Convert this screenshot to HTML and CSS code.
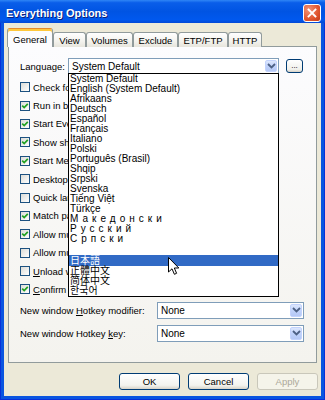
FILE: index.html
```html
<!DOCTYPE html>
<html lang="en">
<head>
    <meta charset="UTF-8">
    <title>Everything Options</title>
    <link rel="stylesheet" href="styles.css">
</head>
<body>
    <div class="window">
        <div class="titlebar">
            <span class="title">Everything Options</span>
            <span class="close-btn">
                <svg width="10" height="10" viewBox="0 0 10 10"><path d="M1.5 1.5 L8.5 8.5 M8.5 1.5 L1.5 8.5" stroke="#fff" stroke-width="1.8" stroke-linecap="square"/></svg>
            </span>
        </div>

        <div class="client">
            <div class="tabs">
                <div class="tab active tab-general">General</div>
                <div class="tab tab-view">View</div>
                <div class="tab tab-volumes">Volumes</div>
                <div class="tab tab-exclude">Exclude</div>
                <div class="tab tab-etp">ETP/FTP</div>
                <div class="tab tab-http">HTTP</div>
            </div>

            <div class="panel">
                <div class="lang-row">
                    <label class="lang-label">Language:</label>
                    <div class="combo lang-combo">
                        <span class="combo-text">System Default</span>
                        <span class="combo-arrow">
                            <svg width="9" height="6" viewBox="0 0 9 6"><path d="M1 1 L4.5 4.5 L8 1" fill="none" stroke="#4d6185" stroke-width="1.8"/></svg>
                        </span>
                        <ul class="dropdown">
                            <li>System Default</li>
                            <li>English (System Default)</li>
                            <li>Afrikaans</li>
                            <li>Deutsch</li>
                            <li>Español</li>
                            <li>Français</li>
                            <li>Italiano</li>
                            <li>Polski</li>
                            <li>Português (Brasil)</li>
                            <li>Shqip</li>
                            <li>Srpski</li>
                            <li>Svenska</li>
                            <li>Tiếng Việt</li>
                            <li>Türkçe</li>
                            <li class="wide">Македонски</li>
                            <li class="wide">Русский</li>
                            <li class="wide">Српски</li>
                            <li class="blank"></li>
                            <li class="cjk selected">日本語</li>
                            <li class="cjk">正體中文</li>
                            <li class="cjk">简体中文</li>
                            <li class="cjk">한국어</li>
                        </ul>
                    </div>
                    <button class="browse">...</button>
                </div>

                <div class="checks">
                    <div class="check-row"><span class="checkbox"></span><span>Check for updates on startup</span></div>
                    <div class="check-row"><span class="checkbox checked"></span><span>Run in background</span></div>
                    <div class="check-row"><span class="checkbox checked"></span><span>Start Everything on system startup</span></div>
                    <div class="check-row"><span class="checkbox checked"></span><span>Show shell context menus</span></div>
                    <div class="check-row"><span class="checkbox checked"></span><span>Start Menu shortcuts</span></div>
                    <div class="check-row"><span class="checkbox"></span><span>Desktop shortcut</span></div>
                    <div class="check-row"><span class="checkbox"></span><span>Quick launch shortcut</span></div>
                    <div class="check-row"><span class="checkbox checked"></span><span>Match path when search contains a slash</span></div>
                    <div class="check-row"><span class="checkbox checked"></span><span>Allow multiple windows</span></div>
                    <div class="check-row"><span class="checkbox"></span><span>Allow multiple instances</span></div>
                    <div class="check-row"><span class="checkbox"></span><span><u>U</u>nload when not in use</span></div>
                    <div class="check-row"><span class="checkbox checked"></span><span><u>C</u>onfirm delete</span></div>
                </div>

                <div class="hotkey-row">
                    <label class="hotkey-label">New window <u>H</u>otkey modifier:</label>
                    <div class="combo hotkey-combo">
                        <span class="combo-text">None</span>
                        <span class="combo-arrow">
                            <svg width="9" height="6" viewBox="0 0 9 6"><path d="M1 1 L4.5 4.5 L8 1" fill="none" stroke="#4d6185" stroke-width="1.8"/></svg>
                        </span>
                    </div>
                </div>
                <div class="hotkey-row">
                    <label class="hotkey-label">New window Hotkey <u>k</u>ey:</label>
                    <div class="combo hotkey-combo">
                        <span class="combo-text">None</span>
                        <span class="combo-arrow">
                            <svg width="9" height="6" viewBox="0 0 9 6"><path d="M1 1 L4.5 4.5 L8 1" fill="none" stroke="#4d6185" stroke-width="1.8"/></svg>
                        </span>
                    </div>
                </div>
            </div>

            <div class="buttons">
                <button class="btn">OK</button>
                <button class="btn">Cancel</button>
                <button class="btn" disabled>Apply</button>
            </div>
        </div>

        <svg class="cursor" width="12" height="19" viewBox="0 0 12 19">
            <path d="M0.5 0.5 L0.5 15 L4 11.8 L6.4 17.3 L8.6 16.3 L6.3 11 L10.8 11 Z" fill="#fff" stroke="#000" stroke-width="1" stroke-linejoin="miter"/>
        </svg>
    </div>
</body>
</html>
```

FILE: styles.css
```css
body {
    margin: 0;
    font-family: "Liberation Sans", Arial, sans-serif;
    font-size: 9.5px;
}
.window {
    position: relative;
    width: 325px;
    height: 400px;
    display: flex;
    flex-direction: column;
    background: #0a55e0;
    box-shadow: inset 1px 0 #0831d9, inset -1px 0 #0831d9, inset 0 -1px #0831d9;
    overflow: hidden;
}
.titlebar {
    height: 23px;
    box-sizing: border-box;
    padding: 3px 4px 0 6px;
    display: flex;
    align-items: center;
    justify-content: space-between;
    background: linear-gradient(#2f86f6 0%, #0a5ee9 12%, #0054e3 50%, #0058ee 85%, #0348d6 100%);
}
.title {
    color: #fff;
    font-weight: bold;
    font-size: 11px;
    text-shadow: 1px 1px #0a1f7a;
}
.close-btn {
    width: 16px;
    height: 16px;
    border: 1px solid #fff;
    border-radius: 3px;
    display: flex;
    align-items: center;
    justify-content: center;
    background: radial-gradient(circle at 30% 30%, #f29377, #e0562f 60%, #c23a17);
}
.client {
    flex: 1;
    margin: 0 4px 4px 4px;
    padding-top: 6px;
    background: #ece9d8;
    display: flex;
    flex-direction: column;
}
.tabs {
    display: flex;
    align-items: flex-end;
    height: 18px;
    margin-left: 3px;
    margin-bottom: -1px;
    position: relative;
    z-index: 1;
}
.tab {
    height: 15px;
    box-sizing: border-box;
    border: 1px solid #919b9c;
    border-bottom: none;
    border-radius: 3px 3px 0 0;
    background: linear-gradient(#ffffff, #f3f2ed 60%, #e7e5dc);
    display: flex;
    align-items: center;
    justify-content: center;
    padding-top: 1px;
}
.tab.active {
    height: 19px;
    background: #fcfcfe;
    border-top: 1px solid #e68b2c;
    box-shadow: inset 0 2px #ffc83c;
    padding-top: 2px;
}
.tab-general { width: 46px; }
.tab-view { width: 33px; }
.tab-volumes { width: 47px; }
.tab-exclude { width: 45px; }
.tab-etp { width: 50px; }
.tab-http { width: 34px; }
.panel {
    height: 317px;
    box-sizing: border-box;
    margin: 0 4px 0 4px;
    padding: 11px 11px 0 11px;
    border: 1px solid #919b9c;
    background: linear-gradient(#fcfcfe, #f4f3ee);
}
.lang-row {
    display: flex;
    align-items: center;
    height: 16px;
}
.lang-label {
    width: 48px;
}
.combo {
    position: relative;
    box-sizing: border-box;
    border: 1px solid #7f9db9;
    background: #fff;
    display: flex;
    align-items: center;
}
.lang-combo {
    width: 211px;
    height: 16px;
}
.combo-text {
    flex: 1;
    padding-left: 3px;
    font-size: 10px;
}
.combo-arrow {
    width: 12px;
    height: 12px;
    margin-right: 1px;
    border-radius: 2px;
    border: 1px solid #c3d3fd;
    box-sizing: border-box;
    background: linear-gradient(#dde7fd, #c1d3fb 50%, #b4c8f6);
    display: flex;
    align-items: center;
    justify-content: center;
}
.dropdown {
    position: absolute;
    top: 100%;
    left: -1px;
    right: -1px;
    margin: 0;
    padding: 0;
    list-style: none;
    border: 1px solid #000;
    background: #fff;
    font-size: 10px;
    z-index: 2;
}
.dropdown li {
    height: 10px;
    line-height: 10px;
    padding-left: 1px;
    white-space: nowrap;
}
.dropdown li.wide {
    letter-spacing: 4px;
}
.dropdown li.blank {
    height: 11px;
}
.dropdown li.cjk {
    font-family: "Liberation Sans", "Noto Sans CJK JP", sans-serif;
    font-size: 10px;
}
.dropdown li.selected {
    height: 11px;
    line-height: 11px;
    background: #316ac5;
    color: #fff;
}
.browse {
    margin-left: 7px;
    width: 17px;
    height: 14px;
    padding: 0;
    border: 1px solid #003c74;
    border-radius: 3px;
    background: linear-gradient(#ffffff, #f0f0ea 80%, #d6d0c5);
    font-size: 8px;
    line-height: 8px;
    font-family: "Liberation Sans", Arial, sans-serif;
}
.checks {
    margin-top: 4px;
}
.check-row {
    height: 18.4px;
    display: flex;
    align-items: center;
    white-space: nowrap;
}
.checkbox {
    width: 10px;
    height: 10px;
    box-sizing: border-box;
    margin-right: 3px;
    border: 1px solid #1c5180;
    background: linear-gradient(135deg, #dcdcd7, #ffffff);
    flex-shrink: 0;
}
.checkbox.checked {
    background: url("data:image/svg+xml;utf8,<svg xmlns='http://www.w3.org/2000/svg' width='8' height='8' viewBox='0 0 8 8'><path d='M1.2 3.6 L3.2 5.6 L6.8 1.8' fill='none' stroke='%2321a121' stroke-width='1.7'/></svg>") no-repeat center, linear-gradient(135deg, #dcdcd7, #ffffff);
}
.hotkey-row {
    display: flex;
    align-items: center;
    margin-top: 3px;
    height: 17px;
}
.hotkey-row + .hotkey-row {
    margin-top: 6px;
}
.hotkey-label {
    width: 137px;
}
.hotkey-combo {
    width: 147px;
    height: 17px;
}
.hotkey-combo .combo-arrow {
    height: 13px;
}
.buttons {
    display: flex;
    justify-content: flex-end;
    gap: 8px;
    padding: 10px 3px 0 0;
}
.btn {
    width: 61px;
    height: 17px;
    padding: 0;
    border: 1px solid #003c74;
    border-radius: 3px;
    background: linear-gradient(#ffffff, #f3f3ee 75%, #d8d3c8);
    font-family: "Liberation Sans", Arial, sans-serif;
    font-size: 9.5px;
    color: #000;
}
.btn:disabled {
    border-color: #c9c7ba;
    background: #f5f4ea;
    color: #aca899;
}
.cursor {
    position: absolute;
    left: 168px;
    top: 257px;
    z-index: 3;
}
```
